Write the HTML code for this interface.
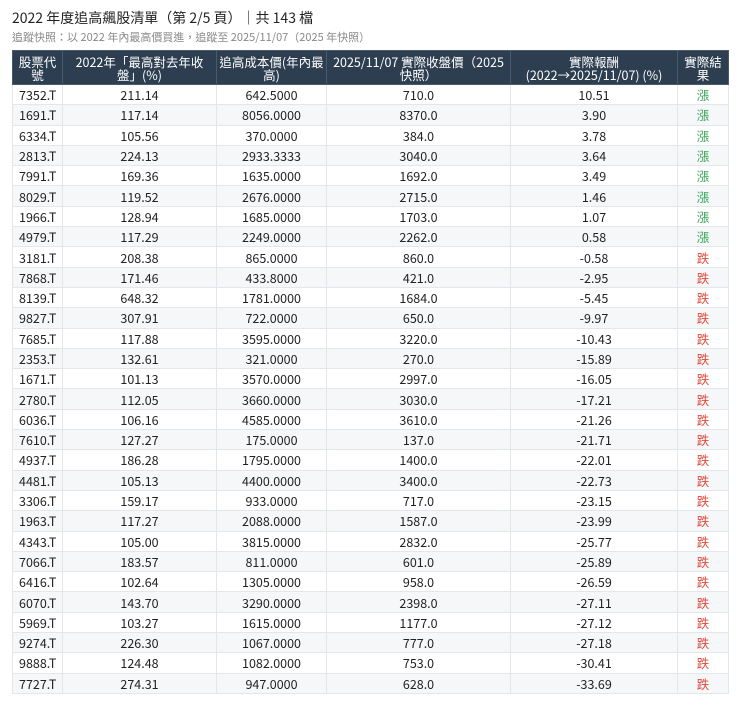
<!DOCTYPE html>
<html><head><meta charset="utf-8"><style>
body{margin:0;background:#fff;font-family:"Noto Sans CJK TC",sans-serif;color:#222;}
.t{position:absolute;left:12px;top:8px;font-size:14px;color:#222;line-height:21px;}
.s{position:absolute;left:12px;top:29px;font-size:11px;color:#888;line-height:16px;}
table{position:absolute;left:12px;top:50px;width:716px;border-collapse:collapse;table-layout:fixed;font-size:12.5px;}
th{background:#2c3e50;color:#fff;font-weight:normal;line-height:13px;height:33px;padding:0 8px;border:1px solid #4a5a6a;font-size:12.5px;overflow:hidden;}
td{height:19.3px;padding:0;text-align:center;border:1px solid #e3e7eb;line-height:19px;overflow:hidden;}
td:first-child{text-align:left;padding-left:6px;}
tr:nth-child(even) td{background:#f5f7f9;}
.u{color:#3aa55a}.d{color:#e04a3a}
</style></head><body>
<div class="t">2022 年度追高飆股清單（第 2/5 頁）｜共 143 檔</div>
<div class="s">追蹤快照：以 2022 年內最高價買進，追蹤至 2025/11/07（2025 年快照）</div>
<table>
<colgroup><col style="width:50px"><col style="width:154px"><col style="width:110px"><col style="width:184px"><col style="width:167px"><col style="width:51px"></colgroup>
<thead><tr><th style="padding:0 4px">股票代號</th><th>2022年「最高對去年收盤」(%)</th><th style="padding:0 2px">追高成本價(年內最高)</th><th style="padding:0 2px">2025/11/07 實際收盤價（2025快照）</th><th>實際報酬<br>(2022→2025/11/07) (%)</th><th style="padding:0 4px">實際結果</th></tr></thead>
<tbody>
<tr><td>7352.T</td><td>211.14</td><td>642.5000</td><td>710.0</td><td>10.51</td><td class="u">漲</td></tr>
<tr><td>1691.T</td><td>117.14</td><td>8056.0000</td><td>8370.0</td><td>3.90</td><td class="u">漲</td></tr>
<tr><td>6334.T</td><td>105.56</td><td>370.0000</td><td>384.0</td><td>3.78</td><td class="u">漲</td></tr>
<tr><td>2813.T</td><td>224.13</td><td>2933.3333</td><td>3040.0</td><td>3.64</td><td class="u">漲</td></tr>
<tr><td>7991.T</td><td>169.36</td><td>1635.0000</td><td>1692.0</td><td>3.49</td><td class="u">漲</td></tr>
<tr><td>8029.T</td><td>119.52</td><td>2676.0000</td><td>2715.0</td><td>1.46</td><td class="u">漲</td></tr>
<tr><td>1966.T</td><td>128.94</td><td>1685.0000</td><td>1703.0</td><td>1.07</td><td class="u">漲</td></tr>
<tr><td>4979.T</td><td>117.29</td><td>2249.0000</td><td>2262.0</td><td>0.58</td><td class="u">漲</td></tr>
<tr><td>3181.T</td><td>208.38</td><td>865.0000</td><td>860.0</td><td>-0.58</td><td class="d">跌</td></tr>
<tr><td>7868.T</td><td>171.46</td><td>433.8000</td><td>421.0</td><td>-2.95</td><td class="d">跌</td></tr>
<tr><td>8139.T</td><td>648.32</td><td>1781.0000</td><td>1684.0</td><td>-5.45</td><td class="d">跌</td></tr>
<tr><td>9827.T</td><td>307.91</td><td>722.0000</td><td>650.0</td><td>-9.97</td><td class="d">跌</td></tr>
<tr><td>7685.T</td><td>117.88</td><td>3595.0000</td><td>3220.0</td><td>-10.43</td><td class="d">跌</td></tr>
<tr><td>2353.T</td><td>132.61</td><td>321.0000</td><td>270.0</td><td>-15.89</td><td class="d">跌</td></tr>
<tr><td>1671.T</td><td>101.13</td><td>3570.0000</td><td>2997.0</td><td>-16.05</td><td class="d">跌</td></tr>
<tr><td>2780.T</td><td>112.05</td><td>3660.0000</td><td>3030.0</td><td>-17.21</td><td class="d">跌</td></tr>
<tr><td>6036.T</td><td>106.16</td><td>4585.0000</td><td>3610.0</td><td>-21.26</td><td class="d">跌</td></tr>
<tr><td>7610.T</td><td>127.27</td><td>175.0000</td><td>137.0</td><td>-21.71</td><td class="d">跌</td></tr>
<tr><td>4937.T</td><td>186.28</td><td>1795.0000</td><td>1400.0</td><td>-22.01</td><td class="d">跌</td></tr>
<tr><td>4481.T</td><td>105.13</td><td>4400.0000</td><td>3400.0</td><td>-22.73</td><td class="d">跌</td></tr>
<tr><td>3306.T</td><td>159.17</td><td>933.0000</td><td>717.0</td><td>-23.15</td><td class="d">跌</td></tr>
<tr><td>1963.T</td><td>117.27</td><td>2088.0000</td><td>1587.0</td><td>-23.99</td><td class="d">跌</td></tr>
<tr><td>4343.T</td><td>105.00</td><td>3815.0000</td><td>2832.0</td><td>-25.77</td><td class="d">跌</td></tr>
<tr><td>7066.T</td><td>183.57</td><td>811.0000</td><td>601.0</td><td>-25.89</td><td class="d">跌</td></tr>
<tr><td>6416.T</td><td>102.64</td><td>1305.0000</td><td>958.0</td><td>-26.59</td><td class="d">跌</td></tr>
<tr><td>6070.T</td><td>143.70</td><td>3290.0000</td><td>2398.0</td><td>-27.11</td><td class="d">跌</td></tr>
<tr><td>5969.T</td><td>103.27</td><td>1615.0000</td><td>1177.0</td><td>-27.12</td><td class="d">跌</td></tr>
<tr><td>9274.T</td><td>226.30</td><td>1067.0000</td><td>777.0</td><td>-27.18</td><td class="d">跌</td></tr>
<tr><td>9888.T</td><td>124.48</td><td>1082.0000</td><td>753.0</td><td>-30.41</td><td class="d">跌</td></tr>
<tr><td>7727.T</td><td>274.31</td><td>947.0000</td><td>628.0</td><td>-33.69</td><td class="d">跌</td></tr>
</tbody></table>
</body></html>
